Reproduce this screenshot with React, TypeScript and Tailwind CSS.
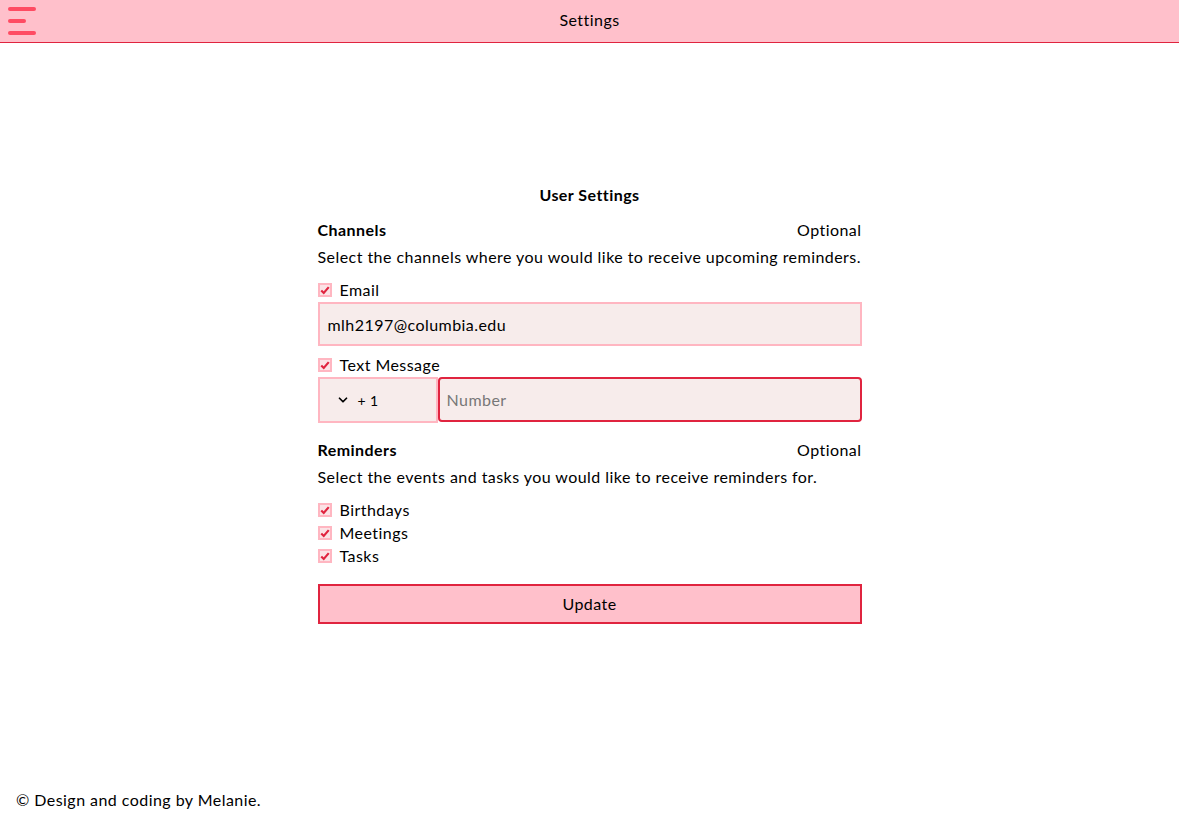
import { ChevronDown } from "lucide-react";

const font = { fontFamily: "Lato, 'Open Sans', sans-serif" };

const Check = ({ label }: { label: string }) => (
  <label className="flex items-center gap-2 h-[23px]">
    <span className="w-[14px] h-[14px] border-2 border-[#ffb6c1] bg-[#fbe3e6] flex items-center justify-center">
      <svg viewBox="0 0 12 12" className="w-[10px] h-[10px]">
        <path d="M1.5 6.5 L4.5 9.5 L10.5 2.5" fill="none" stroke="#e0243f" strokeWidth="2.6" />
      </svg>
    </span>
    <span>{label}</span>
  </label>
);

export default function App() {
  return (
    <div className="min-h-[819px] flex flex-col bg-white text-black text-[16px] tracking-[0.45px]" style={font}>
      {/* Header */}
      <header className="h-[43px] bg-[#ffc0cb] border-b border-[#e0243f] flex items-center relative pb-[2px]">
        <div className="absolute left-[8px] top-[7px] flex flex-col gap-[8px]">
          <span className="block w-[28px] h-[4px] rounded-full bg-[#ff4b63]" />
          <span className="block w-[18px] h-[4px] rounded-full bg-[#ff4b63]" />
          <span className="block w-[28px] h-[4px] rounded-full bg-[#ff4b63]" />
        </div>
        <h1 className="w-full text-center">Settings</h1>
      </header>

      <main className="flex-1 flex justify-center pt-[140px]">
        <div className="w-[544px] flex flex-col">
          <h2 className="font-bold text-center mb-[11px]">User Settings</h2>

          <div className="flex justify-between mb-[3px]">
            <span className="font-bold">Channels</span>
            <span>Optional</span>
          </div>
          <p className="mb-[9px]">Select the channels where you would like to receive upcoming reminders.</p>

          <Check label="Email" />
          <input
            defaultValue="mlh2197@columbia.edu"
            className="mt-[1px] h-[44px] w-full border-2 border-[#ffb6c1] bg-[#f7eceb] px-[8px] outline-none mb-[7px]"
          />

          <Check label="Text Message" />
          <div className="mt-[1px] flex items-start h-[46px] mb-[15px]">
            <div className="w-[120px] h-[46px] border-2 border-[#ffb6c1] bg-[#f7eceb] flex items-center gap-[8px] pl-[16px] text-[14px]">
              <ChevronDown className="w-[14px] h-[14px]" strokeWidth={3} />
              <span>+ 1</span>
            </div>
            <input
              placeholder="Number"
              className="flex-1 h-[45px] border-2 border-[#e0243f] rounded-[4px] bg-[#f7eceb] px-[7px] outline-none placeholder:text-[#777]"
            />
          </div>

          <div className="flex justify-between mb-[3px]">
            <span className="font-bold">Reminders</span>
            <span>Optional</span>
          </div>
          <p className="mb-[9px]">Select the events and tasks you would like to receive reminders for.</p>

          <Check label="Birthdays" />
          <Check label="Meetings" />
          <Check label="Tasks" />

          <button className="mt-[17px] h-[40px] w-full border-2 border-[#e0243f] bg-[#ffc0cb]">Update</button>
        </div>
      </main>

      <footer className="px-[16px] pb-[7px]">© Design and coding by Melanie.</footer>
    </div>
  );
}
